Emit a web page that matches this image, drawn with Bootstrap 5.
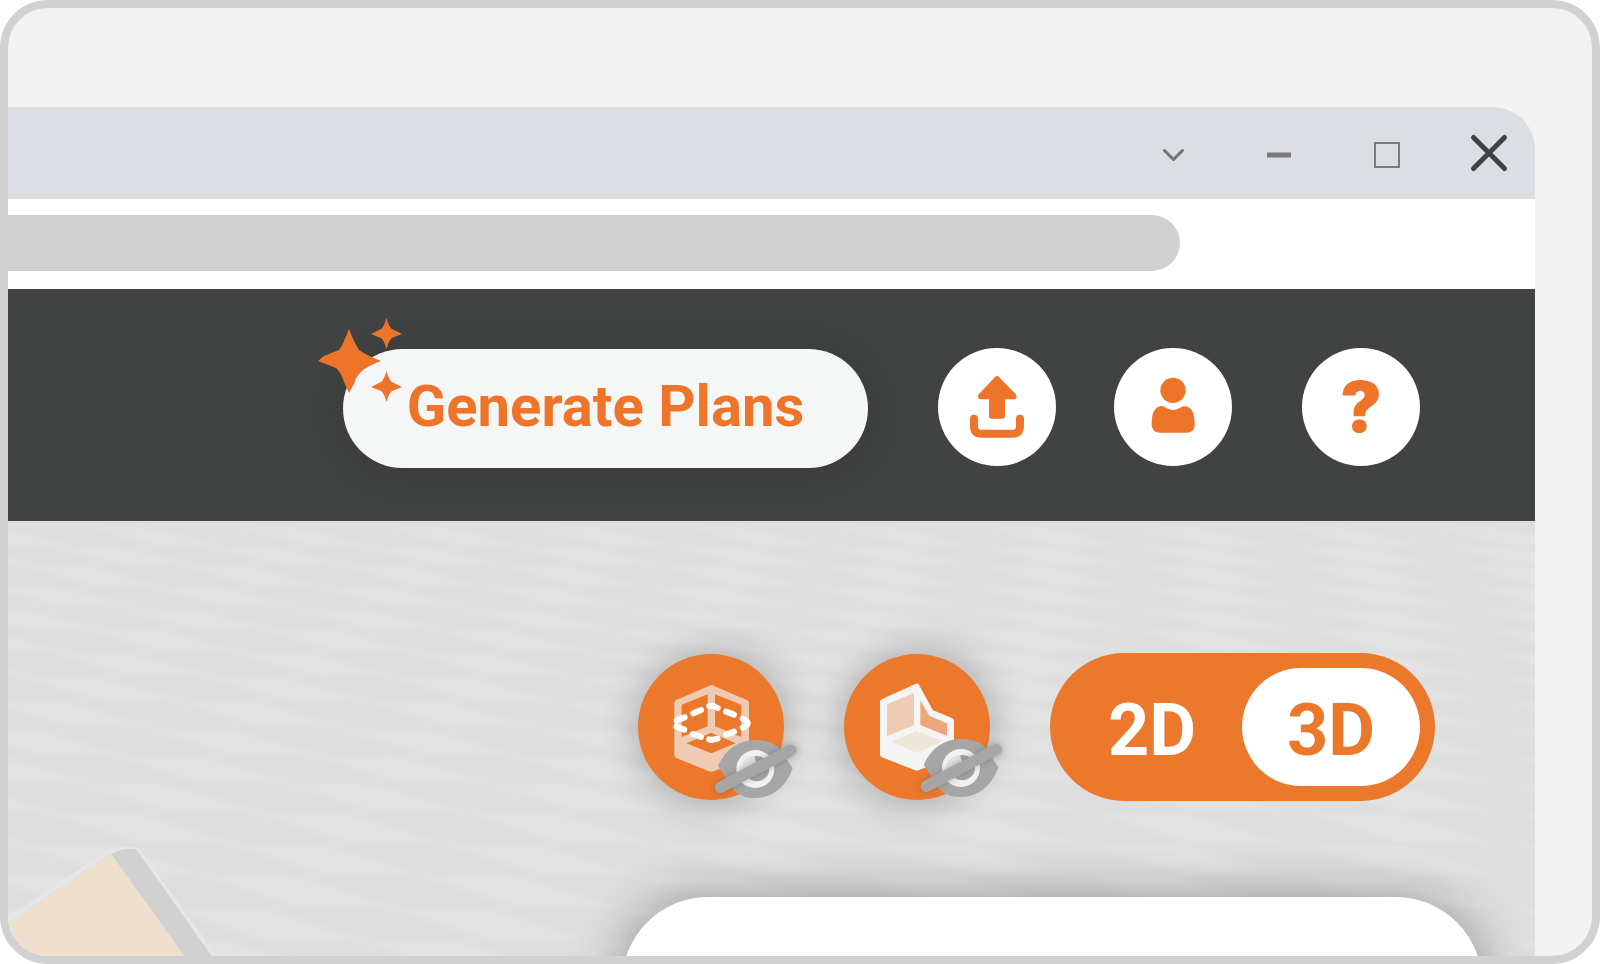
<!DOCTYPE html>
<html lang="en">
<head>
<meta charset="utf-8">
<meta name="viewport" content="width=device-width, initial-scale=1">
<title>Plan viewer</title>
<link rel="stylesheet" href="https://cdn.jsdelivr.net/npm/bootstrap@5.3.0/dist/css/bootstrap.min.css">
<style>
  :root { --brand: #ed7428; --brand-2: #ec782b; --ink: #414342; }
  body { background: #fff; font-family: Roboto, "Liberation Sans", sans-serif; }
  .frame { border: 8px solid #d1d1d1; border-radius: 48px; background: #f3f3f3; padding: 99px 57px 0 0; }
  .app-window { border-top-right-radius: 42px; background: #fff; }
  .title-bar { height: 92px; background: #dbdee3; padding-right: 28px; gap: 70px; }
  .win-btn { width: 36px; height: 36px; }
  .win-btn svg { overflow: visible; }
  .address-row { height: 90px; padding: 16px 355px 0 0; }
  .address { height: 56px; background: #d1d1d1; border-radius: 0 28px 28px 0; }
  .app-header { height: 232px; background: var(--ink); padding: 59px 115px 0 0; }
  .generate { width: 525px; height: 119px; margin: 1px 70px 0 0; padding: 0 0 6px; border-radius: 60px; background: #f5f7f6;
    color: var(--brand); font-size: 58px; font-weight: 700; line-height: 60px; box-shadow: 0 4px 26px 8px rgba(40,40,40,.2); }
  .sparkles { left: -25px; top: -31px; }
  .round-btn { width: 118px; height: 118px; background: #fff; color: var(--brand); }
  .help-mark { font-family: Inter, sans-serif; font-size: 70px; font-weight: 900; line-height: 116px; }
  .stage { background: #dedede; }
  .view-row { padding: 132px 100px 0 0; gap: 60px; }
  .view-btn { width: 146px; height: 146px; background: var(--brand-2); box-shadow: 0 0 34px 6px rgba(60,60,60,.28); }
  .mode { width: 385px; height: 148px; border-radius: 74px; background: var(--brand-2); padding: 15px 15px 15px 24px; }
  .mode-opt { width: 156px; border-radius: 59px; color: #fff; font-size: 72px; font-weight: 700; padding-top: 8px; cursor: pointer; }
  .btn-check:checked + .mode-opt { width: 178px; background: #fff; color: var(--brand-2); }
  .side-panel { min-height: 140px; margin: 96px 53px -80px 614px; border-radius: 86px 86px 0 0; background: #fff; box-shadow: 0 0 44px 8px rgba(60,60,60,.34); }
</style>
</head>
<body>
<div class="frame vh-100 overflow-hidden">
  <main class="app-window h-100 d-flex flex-column overflow-hidden">
    <div class="title-bar flex-shrink-0 d-flex align-items-center justify-content-end">
      <button class="win-btn btn p-0 border-0 d-flex" aria-label="More"><svg width="36" height="36" fill="none" stroke="#747474" stroke-width="3" stroke-linecap="round" stroke-linejoin="round"><path d="M11.500 15.500L20.500 24.500L29.500 15.500"/></svg></button>
      <button class="win-btn btn p-0 border-0 d-flex" aria-label="Minimize"><svg width="36" height="36"><path d="M8 17.500h24v5H8z" fill="#7b7b7b"/></svg></button>
      <button class="win-btn btn p-0 border-0 d-flex" aria-label="Maximize"><svg width="36" height="36"><path d="M10 8h24v24H10z" fill="none" stroke="#7b7b7b" stroke-width="2"/></svg></button>
      <button class="win-btn btn p-0 border-0 d-flex" aria-label="Close"><svg width="36" height="36"><path d="M2.500 2.500l31 31M33.500 2.500l-31 31" fill="none" stroke="#414342" stroke-width="5" stroke-linecap="round"/></svg></button>
    </div>
    <div class="address-row flex-shrink-0"><input class="address d-block w-100 border-0" type="text" aria-label="Address" readonly></div>

    <header class="app-header flex-shrink-0 d-flex align-items-start justify-content-end">
      <button class="generate btn border-0 position-relative text-nowrap">
        <svg class="sparkles position-absolute" width="86" height="86" fill="#ed7428" aria-hidden="true">
          <path d="M31 11Q36 24 41 32Q50 38 63 43Q52 47 45 52Q38 58 36 66L31 75L26 64Q23 54 18 50L0 43L6 38Q13 35 21 32Q25 27 31 11Z"/>
          <path id="spark" d="M68.500 0Q71 9 74 11L84 16L74 20Q71 22 68.500 31Q66 22 63 20L53 16L63 11Q66 9 68.500 0Z"/>
          <use href="#spark" y="53"/>
        </svg>
        Generate Plans
      </button>
      <button class="round-btn btn rounded-circle p-0 border-0" aria-label="Upload">
        <svg class="d-block" width="118" height="118" viewBox="54 54 354 354" fill="#ed7428"><path d="M225 141Q231 135 237 141L287 192Q293 201 286 208H255V258Q255 266 247 266H215Q207 266 207 258V208H178Q170 201 177 192Z"/><path d="M162 266V287Q162 311 184 311H278Q300 311 300 287V266" fill="none" stroke="#ed7428" stroke-width="24" stroke-linecap="round"/></svg>
      </button>
      <button class="round-btn btn rounded-circle p-0 border-0" style="margin-left:58px" aria-label="Account">
        <svg class="d-block" width="118" height="118" viewBox="583 54 354 354" fill="#ed7428"><circle cx="760" cy="181" r="38"/><path d="M724 228Q733 227 740 234Q760 246 780 234Q788 227 797 229C816 231 825 253 825 278V287Q822 308 801 308H719Q698 307 696 286V276C697 248 706 231 724 228Z"/></svg>
      </button>
      <button class="round-btn help-mark btn rounded-circle p-0 border-0" style="margin-left:70px" aria-label="Help">?</button>
    </header>

    <section class="stage flex-fill position-relative d-flex flex-column overflow-hidden">
      <svg class="position-absolute top-0 start-0 w-100 h-100" viewBox="8 521 1527 435" preserveAspectRatio="xMinYMin slice" aria-hidden="true">
        <defs><filter id="soft"><feGaussianBlur stdDeviation="8 2"/></filter></defs>
        <g id="grain" fill="#e3e3e3" filter="url(#soft)"></g>
        <path d="M8 920L108 852Q122 847 138 850L215 957" fill="none" stroke="#e6e6e6" stroke-width="4"/>
        <path d="M111 854Q122 848 136 849L213 958H184Z" fill="#d1d1d1"/>
        <path d="M8 924L111 854L186 958H8Z" fill="#eee0cd"/>
      </svg>

      <div class="view-row position-relative d-flex align-items-center justify-content-end">
        <button class="view-btn btn rounded-circle p-0 border-0" aria-label="Hide section cut">
          <svg class="d-block overflow-visible" width="146" height="146" viewBox="48 45 438 438">
            <path fill="#f0cbb3" fill-rule="evenodd" d="M262 140Q268 136 274 140L376 184Q381 187 381 193V348Q381 353 376 356L277 396Q268 400 259 396L161 356Q157 353 157 348V193Q157 187 161 184ZM257 166L179 197V294L257 262ZM279 166V262L358 294V197ZM268 281L193 313L268 343L341 313Z"/>
            <g fill="none" stroke="#fff" stroke-width="18" stroke-linecap="round" stroke-linejoin="round"><path d="M164 244L188 235M214 223L237 213M262 201Q274 199 287 207M312 218L336 227M362 239Q393 253 362 266M336 278L312 287M287 299L268 303L261 301M237 294L213 285M187 272L163 263"/></g>
            <g id="hidden-eye">
              <defs><filter id="cast" x="-30%" y="-30%" width="160%" height="160%"><feDropShadow dx="0" dy="0" stdDeviation="10" flood-color="#444" flood-opacity=".4"/></filter></defs>
              <path d="M288 380C310 333 347 303 400 303C442 303 468 320 482 336L495 362L512 388C492 443 453 477 400 477C368 477 348 466 334 452Z" fill="#a6a6a6"/>
              <circle cx="400" cy="390" r="57" fill="#f1f1f1"/><circle cx="404" cy="389" r="38" fill="#a3a3a3"/><path d="M355 404A45 45 0 0 1 398 350Q397 366 408 374Z" fill="#e2e2e2"/>
              <path d="M296 445L506 334" stroke="#a6a6a6" stroke-width="34" stroke-linecap="round" filter="url(#cast)"/>
            </g>
          </svg>
        </button>
        <button class="view-btn btn rounded-circle p-0 border-0" aria-label="Hide walls">
          <svg class="d-block overflow-visible" width="146" height="146" viewBox="51 43 438 438">
            <path d="M269 140L312 218L373 243V348L269 385L167 345V186Z" fill="#f5f5f4" stroke="#f5f5f4" stroke-width="16" stroke-linejoin="round"/>
            <path d="M180 194L261 160V256L180 290Z" fill="#f0cbb3"/><path d="M280 182L307 228L360 251V289L280 256Z" fill="#eea77d"/><path d="M269 274L348 305L269 339L194 306Z" fill="#eee5db"/>
            <use href="#hidden-eye" x="2" y="-5"/>
          </svg>
        </button>
        <div class="mode d-flex" role="group" aria-label="View mode">
          <input class="btn-check" type="radio" name="mode" id="mode2d"><label class="mode-opt d-flex align-items-center justify-content-center" for="mode2d">2D</label>
          <input class="btn-check" type="radio" name="mode" id="mode3d" checked><label class="mode-opt d-flex align-items-center justify-content-center ms-auto" for="mode3d">3D</label>
        </div>
      </div>
      <div class="side-panel position-relative flex-shrink-0"></div>
    </section>
  </main>
</div>
<script src="https://cdn.jsdelivr.net/npm/bootstrap@5.3.0/dist/js/bootstrap.bundle.min.js"></script>
<script>
  // Floor boards: slanted light patches, growing toward the viewer
  let d = '', y = 527, h = 19, p = 150, start = 90;
  while (y < 960) {
    for (let x = start - 2 * p; x < 1600; x += p)
      d += `M${x} ${y + 1}h${p * .42}L${x + p * .86} ${y + h - 1}h${-p * .44}Z`;
    y += h; h *= 1.04; p += 5; start -= 33;
    if (start < 0) start += p;
  }
  document.getElementById('grain').innerHTML = `<path d="${d}"/>`;
</script>
</body>
</html>
